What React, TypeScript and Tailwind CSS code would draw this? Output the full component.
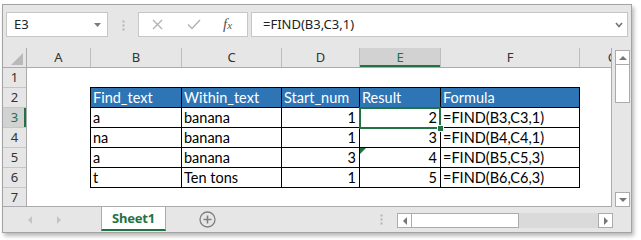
import React from "react";

const dataRows = [
  ["a", "banana", "1", "2", "=FIND(B3,C3,1)"],
  ["na", "banana", "1", "3", "=FIND(B4,C4,1)"],
  ["a", "banana", "3", "4", "=FIND(B5,C5,3)"],
  ["t", "Ten tons", "1", "5", "=FIND(B6,C6,3)"],
];

const tableCols = ["w-[91px]", "w-[100px]", "w-[78px]", "w-[81px]", "w-[139px]"];
const heads = ["Find_text", "Within_text", "Start_num", "Result", "Formula"];

const colHeads = [
  { l: "A", w: "w-[64px]" },
  { l: "B", w: "w-[91px]" },
  { l: "C", w: "w-[100px]" },
  { l: "D", w: "w-[78px]" },
  { l: "E", w: "w-[81px]" },
  { l: "F", w: "w-[139px]" },
  { l: "G", w: "w-[66px]" },
];

function ArrowUp() {
  return (
    <svg width="8" height="4" viewBox="0 0 8 4">
      <path d="M0 4h8L4 0z" fill="#777" />
    </svg>
  );
}
function ArrowDown() {
  return (
    <svg width="8" height="4" viewBox="0 0 8 4">
      <path d="M0 0h8L4 4z" fill="#777" />
    </svg>
  );
}
function ArrowLeft({ c = "#777" }: { c?: string }) {
  return (
    <svg width="4" height="8" viewBox="0 0 4 8">
      <path d="M4 0v8L0 4z" fill={c} />
    </svg>
  );
}
function ArrowRight({ c = "#777" }: { c?: string }) {
  return (
    <svg width="4" height="8" viewBox="0 0 4 8">
      <path d="M0 0v8l4-4z" fill={c} />
    </svg>
  );
}

export default function App() {
  return (
    <div className="w-[641px] h-[240px] bg-white pt-[4px] pl-[2px] overflow-hidden">
      <div className="w-[630px] h-[229px] border border-[#a3a3a3] bg-[#e6e6e6] flex flex-col shadow-[2px_3px_4px_rgba(0,0,0,0.28)] font-['Noto_Sans',sans-serif]">
        {/* formula bar */}
        <div className="h-[43px] shrink-0 flex items-start pt-[7px] pl-[3px]">
          <div className="w-[102px] h-[25px] bg-white border border-[#c6c6c6] flex items-center pl-[7px] pr-[6px]">
            <span className="flex-1 text-[13px] leading-[23px] text-[#222]">E3</span>
            <svg width="7" height="4" viewBox="0 0 7 4">
              <path d="M0 0h7L3.5 4z" fill="#7a7a7a" />
            </svg>
          </div>
          <svg className="ml-[14px] mt-[8px]" width="3" height="12" viewBox="0 0 3 12">
            <rect x="0.5" y="0.5" width="2" height="2" fill="#b4b4b4" />
            <rect x="0.5" y="4.5" width="2" height="2" fill="#b4b4b4" />
            <rect x="0.5" y="8.5" width="2" height="2" fill="#b4b4b4" />
          </svg>
          <div className="ml-[13px] w-[110px] h-[25px] bg-white border border-[#c6c6c6] flex items-center">
            <svg className="ml-[13px]" width="11" height="11" viewBox="0 0 11 11">
              <path d="M1 1L10 10M10 1L1 10" stroke="#b3b3b3" strokeWidth="1.4" />
            </svg>
            <svg className="ml-[24px]" width="14" height="11" viewBox="0 0 14 11">
              <path d="M1 5.5L5 9.5L13 1" stroke="#b3b3b3" strokeWidth="1.5" fill="none" />
            </svg>
            <span className="ml-[22px] italic font-['Liberation_Serif',serif] text-[15px] leading-[23px] text-[#555]">
              f<span className="text-[11px]">x</span>
            </span>
          </div>
          <div className="ml-[3px] w-[377px] h-[25px] bg-white border border-[#c6c6c6] flex items-center pl-[11px] pr-[4px]">
            <span className="flex-1 text-[13px] leading-[23px] text-[#222]">=FIND(B3,C3,1)</span>
            <svg width="8" height="6" viewBox="0 0 8 6">
              <path d="M1 1L4 4.5L7 1" stroke="#777" strokeWidth="1.7" fill="none" />
            </svg>
          </div>
        </div>

        {/* sheet region */}
        <div className="h-[159px] shrink-0 flex">
          <div className="w-[609px] h-[159px] border-r border-b border-[#ababab] flex flex-col overflow-hidden">
            {/* column headers */}
            <div className="h-[20px] shrink-0 flex border-b border-[#ababab] text-[13px] leading-[19px] text-[#333]">
              <div className="w-[24px] shrink-0 border-r border-[#ababab] relative">
                <svg className="absolute left-[8px] top-[5px]" width="12" height="12" viewBox="0 0 12 12">
                  <path d="M12 0V12H0z" fill="#b9b9b9" />
                </svg>
              </div>
              {colHeads.map((c) => (
                <div
                  key={c.l}
                  className={
                    c.l === "E"
                      ? `${c.w} shrink-0 border-r border-[#bdbdbd] text-center bg-[#d2d2d2] text-[#217346] shadow-[inset_0_-2px_0_#217346]`
                      : `${c.w} shrink-0 border-r border-[#bdbdbd] text-center`
                  }
                >
                  {c.l}
                </div>
              ))}
            </div>
            {/* body */}
            <div className="h-[138px] flex">
              <div className="w-[24px] shrink-0 border-r border-[#ababab] flex flex-col text-[13px] leading-[19px] text-[#333]">
                {[1, 2, 3, 4, 5, 6].map((n) => (
                  <div
                    key={n}
                    className={
                      n === 3
                        ? "h-[20px] shrink-0 border-b border-[#c6c6c6] text-center bg-[#d2d2d2] text-[#217346] shadow-[inset_-2px_0_0_#217346]"
                        : "h-[20px] shrink-0 border-b border-[#c6c6c6] text-center"
                    }
                  >
                    {n}
                  </div>
                ))}
                <div className="h-[18px] shrink-0 text-center">7</div>
              </div>
              <div className="flex-1 bg-white pt-[19px] pl-[63px]">
                <div className="w-[490px] border-l border-t border-black relative font-['Lato',sans-serif] text-[14.5px] leading-[19px] text-black">
                  <div className="flex h-[20px] bg-[#2e75b6] text-white">
                    {heads.map((h, i) => (
                      <div key={h} className={`${tableCols[i]} h-[20px] shrink-0 border-r border-b border-black pl-[2px] whitespace-nowrap overflow-hidden`}>
                        {h}
                      </div>
                    ))}
                  </div>
                  {dataRows.map((r, ri) => (
                    <div key={ri} className="flex h-[20px]">
                      {r.map((v, i) => (
                        <div
                          key={i}
                          className={
                            i === 2 || i === 3
                              ? `${tableCols[i]} h-[20px] shrink-0 border-r border-b border-black pr-[3px] text-right relative`
                              : `${tableCols[i]} h-[20px] shrink-0 border-r border-b border-black pl-[2px] whitespace-nowrap`
                          }
                        >
                          {ri === 2 && i === 3 && (
                            <div className="absolute left-0 top-0 w-0 h-0 border-t-[6px] border-t-[#1e7145] border-r-[6px] border-r-transparent" />
                          )}
                          {v}
                        </div>
                      ))}
                    </div>
                  ))}
                  {/* selection */}
                  <div className="absolute left-[268px] top-[19px] w-[82px] h-[22px] border-2 border-[#217346]" />
                  <div className="absolute left-[346px] top-[37px] w-[7px] h-[7px] bg-[#217346] border border-white" />
                </div>
              </div>
            </div>
          </div>
          {/* vertical scrollbar */}
          <div className="w-[19px] h-[159px] pl-[3px] pr-[1px] pt-[2px] flex flex-col">
            <div className="w-[15px] h-[15px] bg-white border border-[#ababab] flex items-center justify-center">
              <ArrowUp />
            </div>
            <div className="w-[15px] h-[38px] bg-white border border-t-0 border-[#ababab]" />
            <div className="flex-1" />
            <div className="w-[15px] h-[15px] bg-white border border-[#ababab] flex items-center justify-center">
              <ArrowDown />
            </div>
          </div>
        </div>

        {/* tab bar */}
        <div className="h-[25px] shrink-0 flex items-start">
          <div className="w-[98px] h-[25px] flex items-center pl-[25px]">
            <ArrowLeft c="#c4c4c4" />
            <div className="ml-[25px]">
              <ArrowRight c="#c4c4c4" />
            </div>
          </div>
          <div className="w-[65px] h-[24px] bg-white border-x border-[#ababab] border-b-2 border-b-[#217346] flex items-center justify-center">
            <span className="text-[13px] font-bold text-[#217346] leading-[20px] tracking-[-0.2px]">Sheet1</span>
          </div>
          <svg className="ml-[33px] mt-[4px]" width="17" height="17" viewBox="0 0 17 17">
            <circle cx="8.5" cy="8.5" r="7.5" stroke="#808080" strokeWidth="1.3" fill="none" />
            <path d="M8.5 4.5V12.5M4.5 8.5H12.5" stroke="#808080" strokeWidth="1.6" />
          </svg>
          <svg className="ml-[164px] mt-[7px]" width="3" height="12" viewBox="0 0 3 12">
            <rect x="0.5" y="0.5" width="2" height="2" fill="#b4b4b4" />
            <rect x="0.5" y="4.5" width="2" height="2" fill="#b4b4b4" />
            <rect x="0.5" y="8.5" width="2" height="2" fill="#b4b4b4" />
          </svg>
          <div className="ml-[14px] mt-[6px] w-[216px] h-[15px] flex bg-[#dadada]">
            <div className="w-[15px] h-[15px] bg-white border border-[#ababab] flex items-center justify-center">
              <ArrowLeft />
            </div>
            <div className="w-[107px] h-[15px] bg-white border border-l-0 border-[#ababab]" />
            <div className="flex-1" />
            <div className="w-[15px] h-[15px] bg-white border border-[#ababab] flex items-center justify-center">
              <ArrowRight />
            </div>
          </div>
        </div>
      </div>
    </div>
  );
}
